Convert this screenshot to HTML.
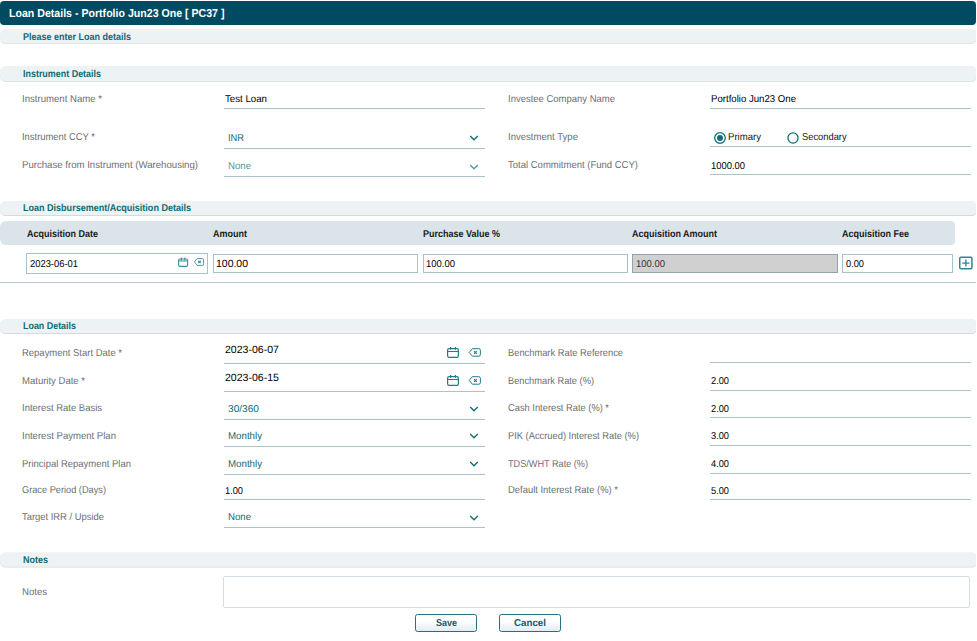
<!DOCTYPE html>
<html><head><meta charset="utf-8"><title>Loan Details</title>
<style>
html,body{margin:0;padding:0;background:#fff;}
body{width:977px;height:641px;position:relative;overflow:hidden;font-family:"Liberation Sans",sans-serif;text-rendering:geometricPrecision;}
.t{position:absolute;white-space:nowrap;line-height:20px;height:20px;transform-origin:0 50%;display:block;}
.b{position:absolute;box-sizing:border-box;}
.bar{position:absolute;left:0;width:976px;height:15px;background:#ecf1f4;border-radius:6px 5px 5px 6px;box-shadow:0 1px 0 #d9dfe3;}
.ul{position:absolute;height:1px;background:#a9c3cb;}
svg{position:absolute;overflow:visible;}

.inp{position:absolute;box-sizing:border-box;border:1px solid #a8c2ca;background:#fff;}

</style></head><body>
<div class="b" style="left:0;top:1px;width:976px;height:24px;background:#004a62;border-radius:4px"></div>
<svg style="left:0;top:0" width="977" height="641" viewBox="0 0 977 641"><path d="M5.5 29.90H972a4 4 0 0 1 4 4V39.80a4 4 0 0 1 -4 4H5.5a5.5 5.5 0 0 1 -5.5 -5.5V35.40a5.5 5.5 0 0 1 5.5 -5.5Z" fill="#d6dadd"/><path d="M5.5 29.10H972a4 4 0 0 1 4 4V39.00a4 4 0 0 1 -4 4H5.5a5.5 5.5 0 0 1 -5.5 -5.5V34.60a5.5 5.5 0 0 1 5.5 -5.5Z" fill="#edf2f5"/><path d="M5.5 66.90H972a4 4 0 0 1 4 4V77.70a4 4 0 0 1 -4 4H5.5a5.5 5.5 0 0 1 -5.5 -5.5V72.40a5.5 5.5 0 0 1 5.5 -5.5Z" fill="#d6dadd"/><path d="M5.5 66.10H972a4 4 0 0 1 4 4V76.90a4 4 0 0 1 -4 4H5.5a5.5 5.5 0 0 1 -5.5 -5.5V71.60a5.5 5.5 0 0 1 5.5 -5.5Z" fill="#edf2f5"/><path d="M5.5 201.90H972a4 4 0 0 1 4 4V211.90a4 4 0 0 1 -4 4H5.5a5.5 5.5 0 0 1 -5.5 -5.5V207.40a5.5 5.5 0 0 1 5.5 -5.5Z" fill="#d6dadd"/><path d="M5.5 201.10H972a4 4 0 0 1 4 4V211.10a4 4 0 0 1 -4 4H5.5a5.5 5.5 0 0 1 -5.5 -5.5V206.60a5.5 5.5 0 0 1 5.5 -5.5Z" fill="#edf2f5"/><path d="M5.5 319.90H972a4 4 0 0 1 4 4V329.90a4 4 0 0 1 -4 4H5.5a5.5 5.5 0 0 1 -5.5 -5.5V325.40a5.5 5.5 0 0 1 5.5 -5.5Z" fill="#d6dadd"/><path d="M5.5 319.10H972a4 4 0 0 1 4 4V329.10a4 4 0 0 1 -4 4H5.5a5.5 5.5 0 0 1 -5.5 -5.5V324.60a5.5 5.5 0 0 1 5.5 -5.5Z" fill="#edf2f5"/><path d="M5.5 553.00H972a4 4 0 0 1 4 4V563.60a4 4 0 0 1 -4 4H5.5a5.5 5.5 0 0 1 -5.5 -5.5V558.50a5.5 5.5 0 0 1 5.5 -5.5Z" fill="#d6dadd"/><path d="M5.5 552.20H972a4 4 0 0 1 4 4V562.80a4 4 0 0 1 -4 4H5.5a5.5 5.5 0 0 1 -5.5 -5.5V557.70a5.5 5.5 0 0 1 5.5 -5.5Z" fill="#edf2f5"/></svg>
<div class="ul" style="left:224px;top:108px;width:261px"></div>
<div class="ul" style="left:224px;top:148px;width:261px"></div>
<div class="ul" style="left:224px;top:176px;width:261px"></div>
<div class="ul" style="left:710px;top:108px;width:261px"></div>
<div class="ul" style="left:710px;top:146px;width:261px"></div>
<div class="ul" style="left:710px;top:174px;width:261px"></div>
<svg style="left:466.3px;top:130.45px" width="16" height="16" viewBox="0 0 24 24" preserveAspectRatio="none"><path fill="#0f6e79" d="M12 13.1714L16.9497 8.22168L18.3639 9.63589L12 15.9999L5.63599 9.63589L7.05021 8.22168L12 13.1714Z"/></svg>
<svg style="left:466.3px;top:158.55px" width="16" height="16" viewBox="0 0 24 24" preserveAspectRatio="none"><path fill="#4f9ca3" d="M12 13.1714L16.9497 8.22168L18.3639 9.63589L12 15.9999L5.63599 9.63589L7.05021 8.22168L12 13.1714Z"/></svg>
<svg style="left:713px;top:131px" width="14" height="14" viewBox="0 0 14 14"><circle cx="7" cy="7" r="5.3" fill="#fff" stroke="#0f6e79" stroke-width="1.3"/><circle cx="7" cy="7" r="3" fill="#0f6e79"/></svg>
<svg style="left:786.3px;top:131px" width="14" height="14" viewBox="0 0 14 14"><circle cx="7" cy="7" r="5.1" fill="#fff" stroke="#0f6e79" stroke-width="1.3"/></svg>
<div class="b" style="left:0;top:221px;width:955px;height:24px;background:#dbe4e8;border-radius:6px 4px 4px 6px"></div>
<div class="inp" style="left:26px;top:253px;width:182px;height:21px"></div>
<div class="inp" style="left:213px;top:254px;width:205px;height:19px"></div>
<div class="inp" style="left:423px;top:254px;width:205px;height:19px"></div>
<div class="inp" style="left:632px;top:254px;width:206px;height:19px;background:#d0d0d0;border-color:#93a4aa"></div>
<div class="inp" style="left:842px;top:254px;width:111px;height:19px"></div>
<svg style="left:0;top:0" width="977" height="641" viewBox="0 0 977 641"><g fill="none" stroke="#3b9099" stroke-width="1.1"><rect x="178.60" y="259.00" width="9.00" height="7.40" rx="1.3"/><path d="M181.40 257.40V260.20M184.80 257.40V260.20M178.60 261.00H187.60"/></g></svg>
<svg style="left:0;top:0" width="977" height="641" viewBox="0 0 977 641"><g fill="none" stroke="#3b9099" stroke-linejoin="round"><path stroke-width="0.9" d="M197.00 258.55H202.35a1.2 1.2 0 0 1 1.2 1.2V264.15a1.2 1.2 0 0 1 -1.2 1.2H197.00L194.45 261.95Z"/><path stroke-width="1.1" d="M198.32 260.75L200.72 263.15M200.72 260.75L198.32 263.15"/></g></svg>
<svg style="left:0;top:0" width="977" height="641" viewBox="0 0 977 641"><g fill="none" stroke="#2a8791"><rect x="959.75" y="257.25" width="12.2" height="11.6" rx="1.3" stroke-width="1.5"/><path stroke-width="1.3" d="M962.3 263.05H969.5M965.9 259.5V266.6"/></g></svg>
<div class="ul" style="left:0;top:282px;width:976px;background:#b5c9cf"></div>
<div class="ul" style="left:224px;top:363px;width:261px"></div>
<div class="ul" style="left:224px;top:391px;width:261px"></div>
<div class="ul" style="left:224px;top:419px;width:261px"></div>
<div class="ul" style="left:224px;top:446px;width:261px"></div>
<div class="ul" style="left:224px;top:474px;width:261px"></div>
<div class="ul" style="left:224px;top:499px;width:261px"></div>
<div class="ul" style="left:224px;top:527px;width:261px"></div>
<div class="ul" style="left:710px;top:362px;width:261px"></div>
<div class="ul" style="left:710px;top:390px;width:261px"></div>
<div class="ul" style="left:710px;top:417px;width:261px"></div>
<div class="ul" style="left:710px;top:445px;width:261px"></div>
<div class="ul" style="left:710px;top:473px;width:261px"></div>
<div class="ul" style="left:710px;top:499px;width:261px"></div>
<svg style="left:0;top:0" width="977" height="641" viewBox="0 0 977 641"><g fill="none" stroke="#1c7d87" stroke-width="1.2"><rect x="447.60" y="348.60" width="10.80" height="8.80" rx="1.6"/><path d="M450.60 346.90V349.80M455.40 346.90V349.80M447.60 351.50H458.40"/></g></svg>
<svg style="left:0;top:0" width="977" height="641" viewBox="0 0 977 641"><g fill="none" stroke="#1c7d87" stroke-linejoin="round"><path stroke-width="1.0" d="M472.36 348.70H478.80a1.6 1.6 0 0 1 1.6 1.6V354.60a1.6 1.6 0 0 1 -1.6 1.6H472.36L469.20 352.45Z"/><path stroke-width="1.1" d="M474.03 351.05L476.83 353.85M476.83 351.05L474.03 353.85"/></g></svg>
<svg style="left:0;top:0" width="977" height="641" viewBox="0 0 977 641"><g fill="none" stroke="#1c7d87" stroke-width="1.2"><rect x="447.60" y="376.60" width="10.80" height="8.80" rx="1.6"/><path d="M450.60 374.90V377.80M455.40 374.90V377.80M447.60 379.50H458.40"/></g></svg>
<svg style="left:0;top:0" width="977" height="641" viewBox="0 0 977 641"><g fill="none" stroke="#1c7d87" stroke-linejoin="round"><path stroke-width="1.0" d="M472.36 376.70H478.80a1.6 1.6 0 0 1 1.6 1.6V382.60a1.6 1.6 0 0 1 -1.6 1.6H472.36L469.20 380.45Z"/><path stroke-width="1.1" d="M474.03 379.05L476.83 381.85M476.83 379.05L474.03 381.85"/></g></svg>
<svg style="left:466.3px;top:400.75px" width="16" height="16" viewBox="0 0 24 24" preserveAspectRatio="none"><path fill="#0f6e79" d="M12 13.1714L16.9497 8.22168L18.3639 9.63589L12 15.9999L5.63599 9.63589L7.05021 8.22168L12 13.1714Z"/></svg>
<svg style="left:466.3px;top:428.25px" width="16" height="16" viewBox="0 0 24 24" preserveAspectRatio="none"><path fill="#0f6e79" d="M12 13.1714L16.9497 8.22168L18.3639 9.63589L12 15.9999L5.63599 9.63589L7.05021 8.22168L12 13.1714Z"/></svg>
<svg style="left:466.3px;top:456.25px" width="16" height="16" viewBox="0 0 24 24" preserveAspectRatio="none"><path fill="#0f6e79" d="M12 13.1714L16.9497 8.22168L18.3639 9.63589L12 15.9999L5.63599 9.63589L7.05021 8.22168L12 13.1714Z"/></svg>
<svg style="left:466.3px;top:509.75px" width="16" height="16" viewBox="0 0 24 24" preserveAspectRatio="none"><path fill="#0f6e79" d="M12 13.1714L16.9497 8.22168L18.3639 9.63589L12 15.9999L5.63599 9.63589L7.05021 8.22168L12 13.1714Z"/></svg>
<div class="inp" style="left:223px;top:576px;width:747px;height:32px;border-color:#cfdfe5;border-radius:2px"></div>
<div class="inp" style="left:415px;top:614px;width:62px;height:18px;border-color:#24707d;border-radius:2.5px;background:linear-gradient(#fff 35%,#e2edf3)"></div>
<div class="inp" style="left:499px;top:614px;width:62px;height:18px;border-color:#24707d;border-radius:2.5px;background:linear-gradient(#fff 35%,#e2edf3)"></div>
<span class="t" id="t0" style="left:9px;top:4px;font-size:11.5px;font-weight:700;color:#fff;transform:scaleX(0.9214);">Loan Details - Portfolio Jun23 One [ PC37 ]</span>
<span class="t" id="t1" style="left:23px;top:28px;font-size:10px;font-weight:700;color:#0e6a73;transform:scaleX(0.8995);">Please enter Loan details</span>
<span class="t" id="t2" style="left:23px;top:65px;font-size:10px;font-weight:700;color:#0e6a73;transform:scaleX(0.8940);">Instrument Details</span>
<span class="t" id="t3" style="left:23px;top:199px;font-size:10px;font-weight:700;color:#0e6a73;transform:scaleX(0.9025);">Loan Disbursement/Acquisition Details</span>
<span class="t" id="t4" style="left:23px;top:317px;font-size:10px;font-weight:700;color:#0e6a73;transform:scaleX(0.8912);">Loan Details</span>
<span class="t" id="t5" style="left:23px;top:551px;font-size:10px;font-weight:700;color:#0e6a73;transform:scaleX(0.8994);">Notes</span>
<span class="t" id="t6" style="left:22px;top:90px;font-size:10px;color:#6b6f73;transform:scaleX(0.9595);">Instrument Name *</span>
<span class="t" id="t7" style="left:22px;top:128px;font-size:10px;color:#6b6f73;transform:scaleX(0.9404);">Instrument CCY *</span>
<span class="t" id="t8" style="left:22px;top:156px;font-size:10px;color:#6b6f73;transform:scaleX(0.9615);">Purchase from Instrument (Warehousing)</span>
<span class="t" id="t9" style="left:225px;top:90px;font-size:10px;color:#000;transform:scaleX(0.9683);">Test Loan</span>
<span class="t" id="t10" style="left:228px;top:129px;font-size:10px;color:#0e6a73;transform:scaleX(0.9284);">INR</span>
<span class="t" id="t11" style="left:228px;top:157px;font-size:10px;color:#4a9aa0;transform:scaleX(0.9621);">None</span>
<span class="t" id="t12" style="left:508px;top:90px;font-size:10px;color:#6b6f73;transform:scaleX(0.9482);">Investee Company Name</span>
<span class="t" id="t13" style="left:508px;top:128px;font-size:10px;color:#6b6f73;transform:scaleX(0.9562);">Investment Type</span>
<span class="t" id="t14" style="left:508px;top:156px;font-size:10px;color:#6b6f73;transform:scaleX(0.9510);">Total Commitment (Fund CCY)</span>
<span class="t" id="t15" style="left:711px;top:90px;font-size:10px;color:#000;transform:scaleX(0.9616);">Portfolio Jun23 One</span>
<span class="t" id="t16" style="left:728.2px;top:128px;font-size:10px;color:#151515;transform:scaleX(0.9578);">Primary</span>
<span class="t" id="t17" style="left:801.6px;top:128px;font-size:10px;color:#151515;transform:scaleX(0.9328);">Secondary</span>
<span class="t" id="t18" style="left:711px;top:157px;font-size:10px;color:#000;transform:scaleX(0.9404);">1000.00</span>
<span class="t" id="t19" style="left:26.6px;top:225px;font-size:10px;font-weight:700;color:#1a1a1a;transform:scaleX(0.8998);">Acquisition Date</span>
<span class="t" id="t20" style="left:212.8px;top:225px;font-size:10px;font-weight:700;color:#1a1a1a;transform:scaleX(0.8999);">Amount</span>
<span class="t" id="t21" style="left:422.8px;top:225px;font-size:10px;font-weight:700;color:#1a1a1a;transform:scaleX(0.8994);">Purchase Value %</span>
<span class="t" id="t22" style="left:632.4px;top:225px;font-size:10px;font-weight:700;color:#1a1a1a;transform:scaleX(0.8983);">Acquisition Amount</span>
<span class="t" id="t23" style="left:842.3px;top:225px;font-size:10px;font-weight:700;color:#1a1a1a;transform:scaleX(0.8999);">Acquisition Fee</span>
<span class="t" id="t24" style="left:30px;top:255px;font-size:10px;color:#000;transform:scaleX(0.9383);">2023-06-01</span>
<span class="t" id="t25" style="left:216.3px;top:254px;font-size:10.5px;color:#000;transform:scaleX(0.9961);">100.00</span>
<span class="t" id="t26" style="left:426px;top:255px;font-size:10px;color:#000;transform:scaleX(0.9479);">100.00</span>
<span class="t" id="t27" style="left:636px;top:255px;font-size:10px;color:#333;transform:scaleX(0.9479);">100.00</span>
<span class="t" id="t28" style="left:846px;top:255px;font-size:10px;color:#000;transform:scaleX(0.9246);">0.00</span>
<span class="t" id="t29" style="left:22px;top:344px;font-size:10px;color:#6b6f73;transform:scaleX(0.9469);">Repayment Start Date *</span>
<span class="t" id="t30" style="left:22px;top:372px;font-size:10px;color:#6b6f73;transform:scaleX(0.9525);">Maturity Date *</span>
<span class="t" id="t31" style="left:22px;top:399px;font-size:10px;color:#6b6f73;transform:scaleX(0.9469);">Interest Rate Basis</span>
<span class="t" id="t32" style="left:22px;top:427px;font-size:10px;color:#6b6f73;transform:scaleX(0.9554);">Interest Payment Plan</span>
<span class="t" id="t33" style="left:22px;top:455px;font-size:10px;color:#6b6f73;transform:scaleX(0.9473);">Principal Repayment Plan</span>
<span class="t" id="t34" style="left:22px;top:481px;font-size:10px;color:#6b6f73;transform:scaleX(0.9217);">Grace Period (Days)</span>
<span class="t" id="t35" style="left:22px;top:508px;font-size:10px;color:#6b6f73;transform:scaleX(0.9397);">Target IRR / Upside</span>
<span class="t" id="t36" style="left:508px;top:344px;font-size:10px;color:#6b6f73;transform:scaleX(0.9319);">Benchmark Rate Reference</span>
<span class="t" id="t37" style="left:508px;top:372px;font-size:10px;color:#6b6f73;transform:scaleX(0.9266);">Benchmark Rate (%)</span>
<span class="t" id="t38" style="left:508px;top:399px;font-size:10px;color:#6b6f73;transform:scaleX(0.9319);">Cash Interest Rate (%) *</span>
<span class="t" id="t39" style="left:508px;top:427px;font-size:10px;color:#6b6f73;transform:scaleX(0.9317);">PIK (Accrued) Interest Rate (%)</span>
<span class="t" id="t40" style="left:508px;top:455px;font-size:10px;color:#6b6f73;transform:scaleX(0.9131);">TDS/WHT Rate (%)</span>
<span class="t" id="t41" style="left:508px;top:481px;font-size:10px;color:#6b6f73;transform:scaleX(0.9424);">Default Interest Rate (%) *</span>
<span class="t" id="t42" style="left:224.6px;top:340px;font-size:10.5px;color:#000;transform:scaleX(1.0052);">2023-06-07</span>
<span class="t" id="t43" style="left:224.6px;top:368px;font-size:10.5px;color:#000;transform:scaleX(1.0052);">2023-06-15</span>
<span class="t" id="t44" style="left:228px;top:400px;font-size:10px;color:#0e6a73;transform:scaleX(1.0133);">30/360</span>
<span class="t" id="t45" style="left:228px;top:427px;font-size:10px;color:#0e6a73;transform:scaleX(0.9710);">Monthly</span>
<span class="t" id="t46" style="left:228px;top:455px;font-size:10px;color:#0e6a73;transform:scaleX(0.9710);">Monthly</span>
<span class="t" id="t47" style="left:225px;top:482px;font-size:10px;color:#000;transform:scaleX(0.9246);">1.00</span>
<span class="t" id="t48" style="left:228px;top:508px;font-size:10px;color:#0e6a73;transform:scaleX(0.9621);">None</span>
<span class="t" id="t49" style="left:711px;top:372px;font-size:10px;color:#000;transform:scaleX(0.9246);">2.00</span>
<span class="t" id="t50" style="left:711px;top:400px;font-size:10px;color:#000;transform:scaleX(0.9246);">2.00</span>
<span class="t" id="t51" style="left:711px;top:427px;font-size:10px;color:#000;transform:scaleX(0.9246);">3.00</span>
<span class="t" id="t52" style="left:711px;top:455px;font-size:10px;color:#000;transform:scaleX(0.9246);">4.00</span>
<span class="t" id="t53" style="left:711px;top:482px;font-size:10px;color:#000;transform:scaleX(0.9246);">5.00</span>
<span class="t" id="t54" style="left:22px;top:583px;font-size:10px;color:#6b6f73;transform:scaleX(0.9569);">Notes</span>
<span class="t" id="t55" style="left:436px;top:614px;font-size:10px;font-weight:700;color:#1d5868;transform:scaleX(0.8990);">Save</span>
<span class="t" id="t56" style="left:514px;top:614px;font-size:10px;font-weight:700;color:#1d5868;transform:scaleX(0.9757);">Cancel</span>
</body></html>
